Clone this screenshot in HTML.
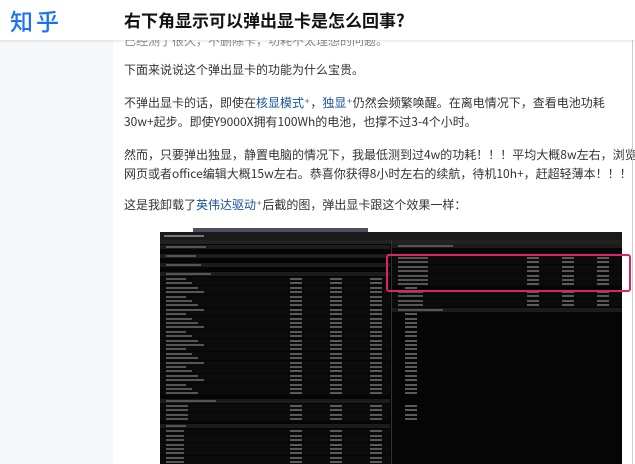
<!DOCTYPE html>
<html><head><meta charset="utf-8"><style>
*{margin:0;padding:0;box-sizing:border-box}
html,body{width:635px;height:464px;overflow:hidden}
body{background:#fff;font-family:"Liberation Sans","Noto Sans CJK SC",sans-serif;position:relative}
.side{position:absolute;left:0;top:0;width:113px;height:464px;background:#f6f7f9}
.hdr{position:absolute;left:0;top:0;width:635px;height:40px;background:#fff;box-shadow:0 1px 3px rgba(0,0,0,.12);z-index:5}
.logo{position:absolute;left:10px;top:3px;font-size:23px;color:#1772f6;letter-spacing:3px;font-family:"Noto Sans CJK SC",sans-serif;font-weight:500}
.title{position:absolute;left:124px;top:7px;font-size:17px;font-weight:bold;color:#121212;font-family:"Noto Sans CJK SC",sans-serif}
.p{position:absolute;left:124px;font-size:12px;color:#333;line-height:18.5px;white-space:nowrap;font-family:"Noto Sans CJK SC",sans-serif}
.a{color:#175199}
.win{position:absolute;left:160px;top:232px;width:462px;height:232px;background:#050505;overflow:hidden}
.band{position:absolute;left:193px;top:228px;width:175px;height:5px;background:#4a5060}
.r{position:absolute;height:4px;background:#141414}
.t{position:absolute;height:2px;background:#555}
.sb{position:absolute;left:632px;top:40px;width:1px;height:424px;background:#ccc}
</style></head><body>
<div class="side"></div>
<div class="hdr"><div class="logo">知乎</div><div class="title">右下角显示可以弹出显卡是怎么回事?</div></div>
<div class="p" style="top:32px;color:#888">已经测了很久，不删除卡，功耗不太理想的问题。</div>
<div class="p" style="top:61px">下面来说说这个弹出显卡的功能为什么宝贵。</div>
<div class="p" style="top:94px">不弹出显卡的话，即使在<span class="a">核显模式⁺</span>，<span class="a">独显⁺</span>仍然会频繁唤醒。在离电情况下，查看电池功耗<br>30w+起步。即使Y9000X拥有100Wh的电池，也撑不过3-4个小时。</div>
<div class="p" style="top:146px">然而，只要弹出独显，静置电脑的情况下，我最低测到过4w的功耗！！！平均大概8w左右，浏览<br>网页或者office编辑大概15w左右。恭喜你获得8小时左右的续航，待机10h+，赶超轻薄本！！！</div>
<div class="p" style="top:196px">这是我卸载了<span class="a">英伟达驱动⁺</span>后截的图，弹出显卡跟这个效果一样：</div>
<div class="band"></div>
<div class="win" id="w">
<div style="position:absolute;left:0;top:0;width:462px;height:8px;background:#1a1a1a"></div>
<div style="position:absolute;left:4px;top:3px;width:40px;height:2px;background:#777"></div>
<div style="position:absolute;left:0;top:8px;width:462px;height:4px;background:#222"></div>
<div style="position:absolute;left:231px;top:8px;width:1px;height:224px;background:#333"></div>
</div>
<div style="position:absolute;left:386px;top:254px;width:245px;height:38px;border:2px solid #d6246e;border-radius:3px"></div>
<div class="sb"></div>
<script>
var w=document.getElementById('w'),h='';
function row(x,y,wd,dark,txt,vals){h+='<div class="r" style="left:'+x+'px;top:'+y+'px;width:'+wd+'px;background:'+(dark?'#1c1c1c':'#0b0b0b')+'"></div>';if(txt)h+='<div class="t" style="left:'+(x+6)+'px;top:'+(y+1)+'px;width:'+txt+'px"></div>';if(vals)for(var i=0;i<vals.length;i++)h+='<div class="t" style="left:'+(x+vals[i])+'px;top:'+(y+1)+'px;width:12px;background:#5a5a5a"></div>';}
var lv=[130,170,210,245];
row(0,13,230,1,40);row(0,22,230,1,30);row(0,31,230,1,35);row(0,40,230,1,45);
var y=45;for(var i=0;i<27;i++){row(0,y,230,0,20+(i%4)*6,lv);y+=4.4;}
row(0,y+3,230,1,50);y+=8;for(i=0;i<4;i++){row(0,y,230,0,22,lv);y+=4.4;}
row(0,y+3,230,1,20);y+=8;for(i=0;i<10;i++){row(0,y,230,0,18,lv.slice(0,3));y+=4.4;}
row(0,y+3,230,1,50);row(0,y+12,230,1,50);
var rv=[135,170,205,240];
row(232,12,230,1,55);row(232,21,230,0,30);
y=24;for(i=0;i<7;i++){row(232,y,230,0,30,rv);y+=4.4;}
y=58;for(i=0;i<4;i++){row(232,y,230,0,25,rv);y+=4.4;}
row(232,76,230,1,45);
w.insertAdjacentHTML('beforeend',h);
</script>
</body></html>
